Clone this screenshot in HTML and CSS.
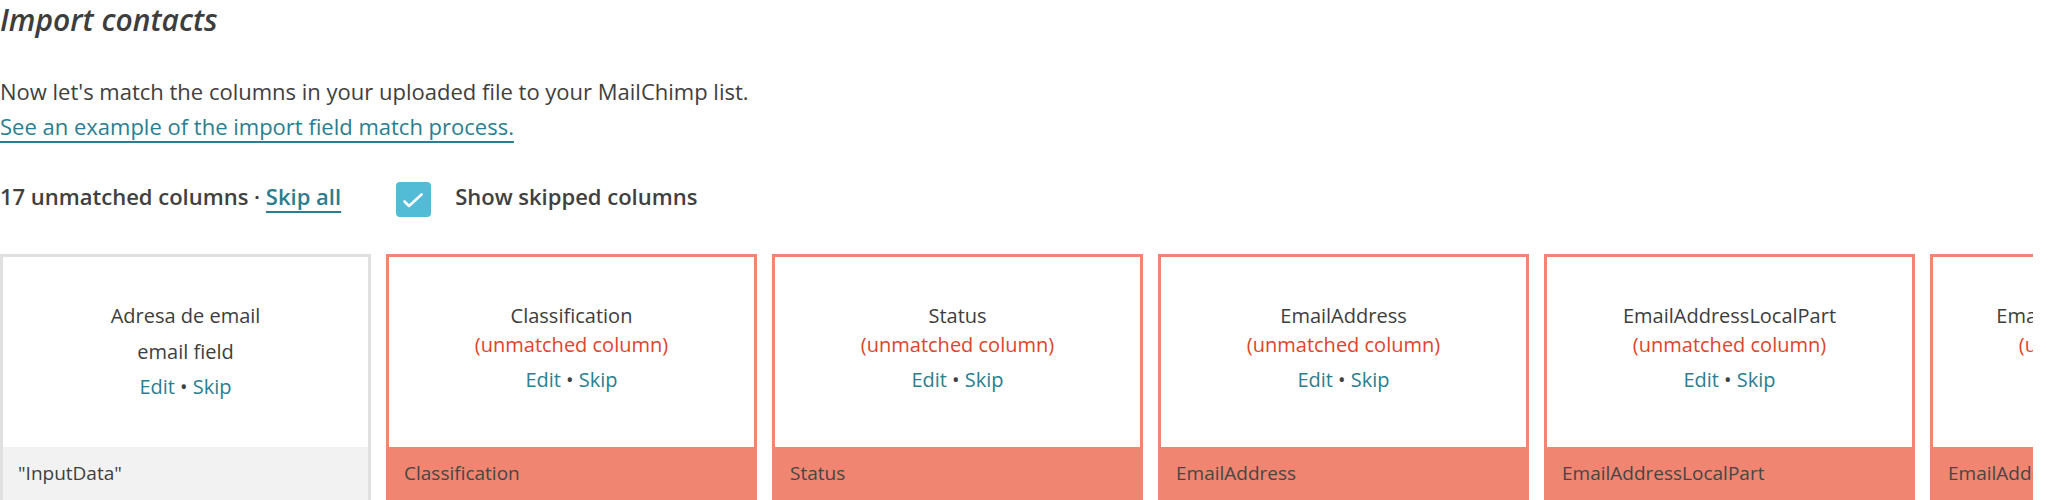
FILE: index.html
```html
<!DOCTYPE html>
<html lang="en">
<head>
<meta charset="utf-8">
<title>Import contacts</title>
<link rel="stylesheet" href="styles.css">
</head>
<body>
<div class="page">
  <h1 class="title">Import contacts</h1>
  <p class="intro">Now let's match the columns in your uploaded file to your MailChimp list.<br>
    <a class="link" href="#">See an example of the import field match process.</a></p>
  <div class="toolbar">
    <div class="count">17 unmatched columns · <a class="link" href="#">Skip all</a></div>
    <label class="toggle">
      <span class="checkbox">
        <svg width="35" height="35" viewBox="0 0 35 35"><path d="M8.5 19.5 L13 24 L25.5 12.5" fill="none" stroke="#fff" stroke-width="2.6" stroke-linecap="round" stroke-linejoin="round"/></svg>
      </span>
      <span class="toggle-label">Show skipped columns</span>
    </label>
  </div>
  <div class="cards">
    <div class="card card-matched">
      <div class="card-body">
        <div class="card-title">Adresa de email</div>
        <div class="card-field">email field</div>
        <div class="card-actions"><a href="#">Edit</a> • <a href="#">Skip</a></div>
      </div>
      <div class="card-foot">"InputData"</div>
    </div>
    <div class="card card-unmatched">
      <div class="card-body">
        <div class="card-title">Classification</div>
        <div class="card-status">(unmatched column)</div>
        <div class="card-actions"><a href="#">Edit</a> • <a href="#">Skip</a></div>
      </div>
      <div class="card-foot">Classification</div>
    </div>
    <div class="card card-unmatched">
      <div class="card-body">
        <div class="card-title">Status</div>
        <div class="card-status">(unmatched column)</div>
        <div class="card-actions"><a href="#">Edit</a> • <a href="#">Skip</a></div>
      </div>
      <div class="card-foot">Status</div>
    </div>
    <div class="card card-unmatched">
      <div class="card-body">
        <div class="card-title">EmailAddress</div>
        <div class="card-status">(unmatched column)</div>
        <div class="card-actions"><a href="#">Edit</a> • <a href="#">Skip</a></div>
      </div>
      <div class="card-foot">EmailAddress</div>
    </div>
    <div class="card card-unmatched">
      <div class="card-body">
        <div class="card-title">EmailAddressLocalPart</div>
        <div class="card-status">(unmatched column)</div>
        <div class="card-actions"><a href="#">Edit</a> • <a href="#">Skip</a></div>
      </div>
      <div class="card-foot">EmailAddressLocalPart</div>
    </div>
    <div class="card card-unmatched">
      <div class="card-body">
        <div class="card-title">EmailAddressDomainPart</div>
        <div class="card-status">(unmatched column)</div>
        <div class="card-actions"><a href="#">Edit</a> • <a href="#">Skip</a></div>
      </div>
      <div class="card-foot">EmailAddressDomainPart</div>
    </div>
  </div>
</div>
</body>
</html>
```
FILE: styles.css
```css
html, body {
  margin: 0;
  padding: 0;
  background: #fff;
}
body {
  font-family: "Open Sans", "DejaVu Sans", sans-serif;
  color: #404040;
  overflow: hidden;
}
.page {
  width: 2033px;
  overflow: hidden;
}
.title {
  margin: 0;
  font-size: 30px;
  line-height: 40px;
  font-style: italic;
  font-weight: 600;
  color: #3d3d3d;
}
.intro {
  margin: 34px 0 0 0;
  font-size: 22px;
  line-height: 35px;
  color: #404040;
}
.link {
  color: #2b7e90;
  text-decoration: underline;
  text-decoration-thickness: 2px;
  text-underline-offset: 6px;
}
.toolbar {
  display: flex;
  align-items: flex-start;
  margin-top: 38px;
  height: 36px;
}
.count {
  font-size: 22px;
  line-height: 35px;
  font-weight: 600;
  color: #404040;
  margin-top: -3px;
}
.toggle {
  display: flex;
  align-items: flex-start;
  margin-left: 55px;
}
.checkbox {
  width: 35px;
  height: 35px;
  border-radius: 4px;
  background: #52bbd6;
  display: block;
}
.checkbox svg {
  display: block;
}
.toggle-label {
  margin-left: 24px;
  font-size: 22px;
  line-height: 35px;
  font-weight: 600;
  color: #404040;
  margin-top: -3px;
}
.cards {
  display: flex;
  gap: 15px;
  margin-top: 36px;
}
.card {
  flex: 0 0 371px;
  box-sizing: border-box;
  border: 3px solid #e0e0e0;
  border-bottom: 0;
  display: flex;
  flex-direction: column;
  background: #fff;
}
.card-unmatched {
  border-color: #f08571;
}
.card-body {
  height: 190px;
  box-sizing: border-box;
  padding-top: 44px;
  text-align: center;
  font-size: 20px;
  line-height: 29px;
  white-space: nowrap;
}
.card-title {
  color: #3d3d3d;
}
.card-field {
  margin-top: 7px;
  color: #404040;
}
.card-status {
  color: #e0442c;
}
.card-actions {
  margin-top: 6px;
  color: #404040;
}
.card-actions a {
  color: #2b7e90;
  text-decoration: none;
}
.card-foot {
  padding: 12px 15px 20px;
  font-size: 19px;
  line-height: 29px;
  color: #404040;
  background: #f2f2f2;
  white-space: nowrap;
  overflow: hidden;
}
.card-unmatched .card-foot {
  background: #f08571;
  color: #464646;
}
```
